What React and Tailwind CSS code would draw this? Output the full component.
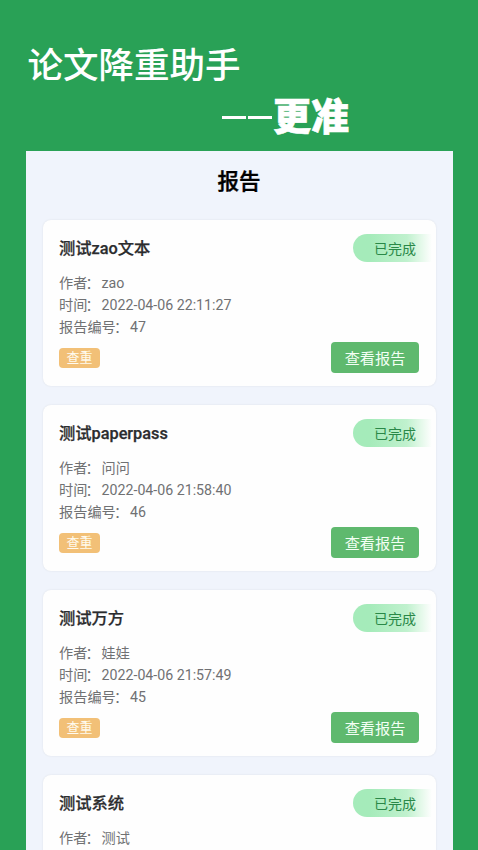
const reports = [
  { id: 47, title: "测试zao文本", author: "zao", time: "2022-04-06 22:11:27" },
  { id: 46, title: "测试paperpass", author: "问问", time: "2022-04-06 21:58:40" },
  { id: 45, title: "测试万方", author: "娃娃", time: "2022-04-06 21:57:49" },
  { title: "测试系统", author: "测试" },
];

function Field({ label, value }) {
  return (
    <p className="flex">
      <span>{label}</span>
      <span className="-mt-px w-[14.2px] -indent-[1.8px] font-['Noto_Sans_CJK_SC',sans-serif]">：</span>
      <span>{value}</span>
    </p>
  );
}

function ReportCard({ report }) {
  return (
    <article className="flex h-[166px] shrink-0 flex-col rounded-lg bg-[#fefefe] pl-4 shadow-[0_0_2px_rgba(90,90,70,0.12)]">
      <div className="mt-3.5 flex h-7 items-center justify-between">
        <h2 className="pt-0.5 text-[16.3px] font-medium leading-7 text-[#2b2c2e] [-webkit-text-stroke:0.25px_#2b2c2e]">
          {report.title}
        </h2>
        <span className="h-7 w-[83px] rounded-l-full bg-gradient-to-r from-[#a5ebba] from-20% via-[#c0f1ce] via-65% to-[#fefefe] to-95% pl-[21px] text-[14px] leading-[30px] text-[#2a8848]">
          已完成
        </span>
      </div>
      <div className="mt-[11px] text-[14.2px] leading-[21.8px] text-[#707173]">
        <Field label="作者" value={report.author} />
        {report.time && <Field label="时间" value={report.time} />}
        {report.id && <Field label="报告编号" value={report.id} />}
      </div>
      {report.id && (
        <div className="mt-[4px] flex items-center justify-between pr-[17px]">
          <span className="h-5 w-[41px] rounded bg-[#f2c077] text-center text-[13px] leading-5 text-[#fffbee]">
            查重
          </span>
          <button className="h-[31px] w-[88px] rounded bg-[#5fb96e] pt-[3px] text-center text-[15.2px] text-[#f3fff4]">
            查看报告
          </button>
        </div>
      )}
    </article>
  );
}

export default function App() {
  return (
    <main
      lang="zh-CN"
      className="flex h-[850px] w-[478px] flex-col overflow-hidden bg-[#29a156] font-['Roboto','Noto_Sans_CJK_SC',sans-serif]"
    >
      <header className="flex h-[151px] shrink-0 flex-col whitespace-nowrap text-white">
        <p className="mt-[41px] pl-[27.5px] text-[35.5px] font-medium leading-[50px]">论文降重助手</p>
        <div className="mt-[1px] flex items-center pl-[222px]">
          <span className="mr-[2px] h-[3px] w-6 bg-white" />
          <span className="mr-px h-[3px] w-6 bg-white" />
          <p className="text-[38px] font-black leading-[50px] [-webkit-text-stroke:0.6px_white]">更准</p>
        </div>
      </header>

      <section className="ml-[26px] flex w-[427px] flex-1 flex-col overflow-hidden bg-[#f0f4fc]">
        <h1 className="h-[69px] shrink-0 pr-px text-center text-[21.5px] font-medium leading-[62px] text-black [-webkit-text-stroke:0.4px_black]">
          报告
        </h1>
        <div className="flex flex-col gap-[19px] px-[17px]">
          {reports.map((report) => (
            <ReportCard key={report.title} report={report} />
          ))}
        </div>
      </section>
    </main>
  );
}
